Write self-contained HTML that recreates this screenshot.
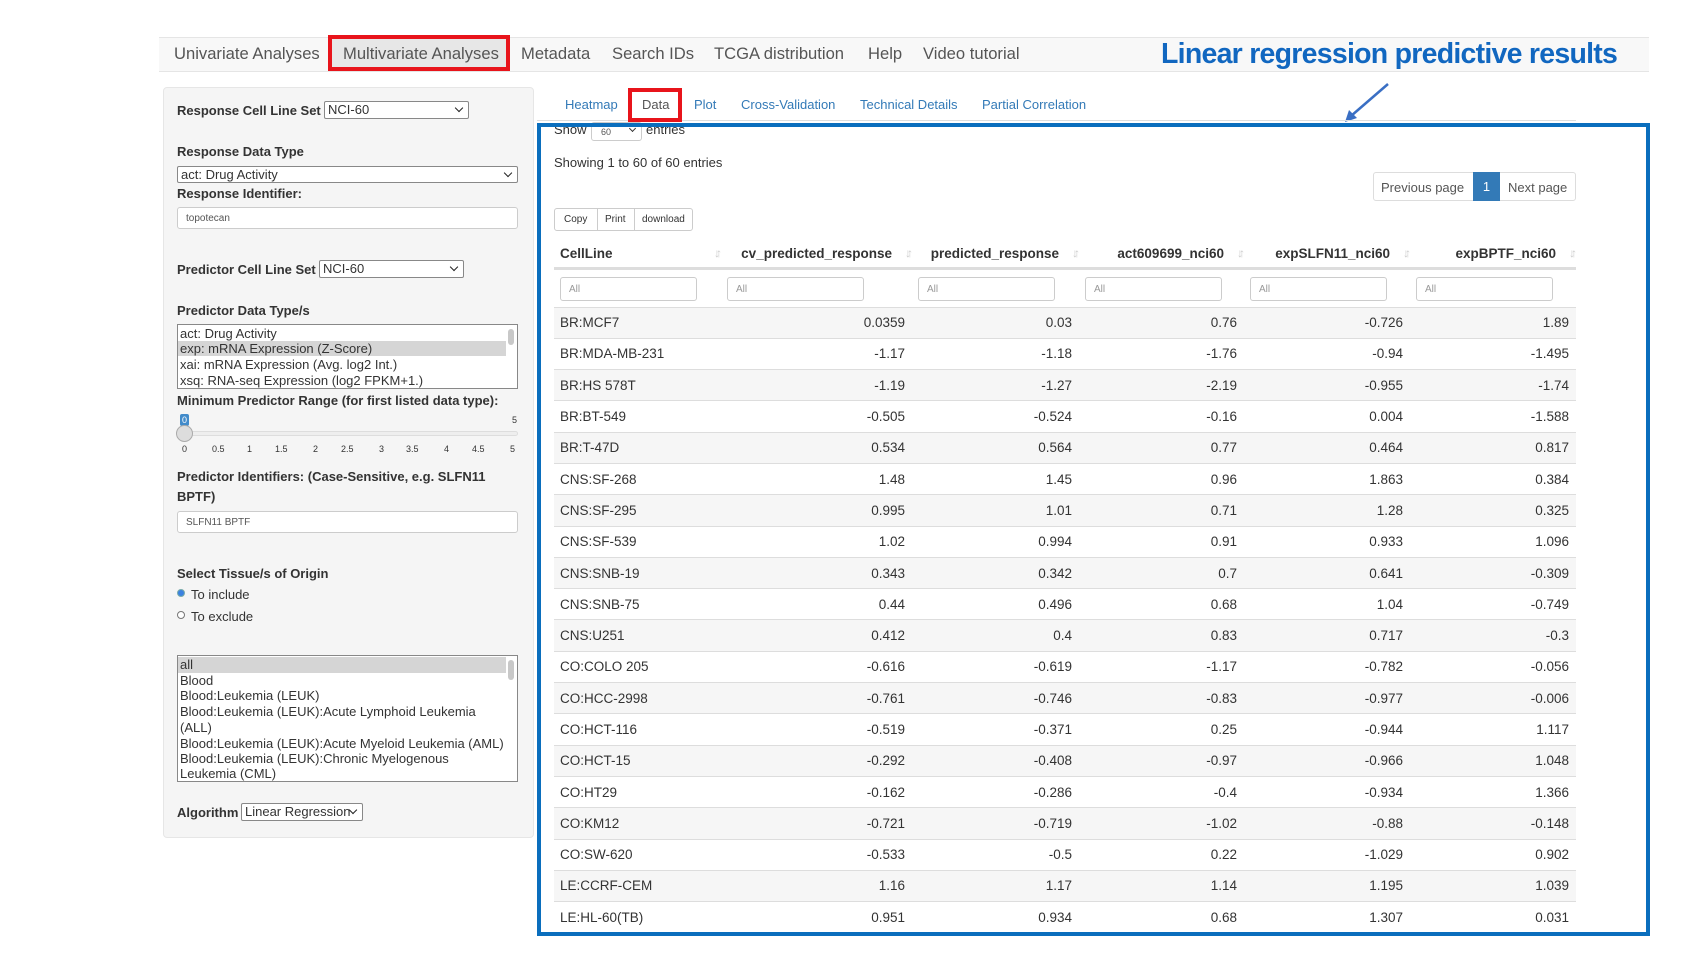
<!DOCTYPE html>
<html><head><meta charset="utf-8"><style>
*{box-sizing:border-box;margin:0;padding:0}
body{width:1700px;height:956px;background:#fff;font-family:"Liberation Sans",Arial,sans-serif;color:#333;position:relative;overflow:hidden}
.a{position:absolute;white-space:nowrap}
.nav{font-size:16.6px;color:#555;top:44px}
.lbl{font-weight:bold;font-size:13px;color:#333}
.sel{position:absolute;background:#fff;border:1px solid #888;border-radius:2px;font-size:13px;padding-left:3px;line-height:15px}
.sel:after{content:"";position:absolute;right:6px;top:3px;width:5px;height:5px;border-right:1.5px solid #222;border-bottom:1.5px solid #222;transform:rotate(45deg)}
.inp{position:absolute;background:#fff;border:1px solid #ccc;border-radius:3px;font-size:10px;color:#555;padding-left:8px}
.tab{font-size:13px;color:#337ab7;top:97px}
table{position:absolute;left:554px;top:240px;width:1022px;border-collapse:collapse;font-size:13.5px;table-layout:fixed}
th{height:28px;font-weight:bold;text-align:right;padding-right:20px;border-bottom:3px solid #ddd;position:relative;vertical-align:middle}
th:after{content:"\2193\2191";position:absolute;right:3px;top:6px;font-size:12px;color:#ccc;letter-spacing:-4px;font-weight:normal}
th.l{text-align:left;padding-left:6px}
td.f{height:39px;border-bottom:1px solid #ddd;padding-left:6px;vertical-align:top;padding-top:7px}
td.f div{width:137px;height:24px;border:1px solid #ccc;border-radius:3px;font-size:10px;color:#999;padding:6px 0 0 8px}
tr.r td{height:31.3px;border-top:1px solid #ddd;text-align:right;padding-right:7px}
tr.r td:first-child{text-align:left;padding-left:6px}
tr.r:nth-child(odd) td{background:#f6f6f6}
.opt{position:absolute;left:2px;font-size:13px;line-height:15.5px;width:330px}
</style></head><body>
<div class="a" style="left:159px;top:37px;width:1490px;height:35px;background:#f8f8f8;border-top:1px solid #e5e5e5;border-bottom:1px solid #e5e5e5"></div>
<div class="a" style="left:331px;top:38px;width:176px;height:30px;background:#e7e7e7"></div>
<div class="a nav" style="left:174px">Univariate Analyses</div>
<div class="a nav" style="left:343px">Multivariate Analyses</div>
<div class="a nav" style="left:521px">Metadata</div>
<div class="a nav" style="left:612px">Search IDs</div>
<div class="a nav" style="left:714px">TCGA distribution</div>
<div class="a nav" style="left:868px">Help</div>
<div class="a nav" style="left:923px">Video tutorial</div>
<div class="a" style="left:328px;top:35px;width:182px;height:36px;border:4px solid #e8141b"></div>
<div class="a" style="left:1161px;top:38px;font-size:28.5px;font-weight:bold;color:#1167c0;letter-spacing:-0.75px">Linear regression predictive results</div>
<svg class="a" style="left:1340px;top:80px" width="55" height="45"><line x1="48" y1="4" x2="11" y2="36" stroke="#3a6fc4" stroke-width="2.5"/><path d="M5 42 L9 30 L17 38 Z" fill="#3a6fc4"/></svg>

<div class="a" style="left:163px;top:87px;width:371px;height:751px;background:#f5f5f5;border:1px solid #e6e6e6;border-radius:4px"></div>
<div class="a lbl" style="left:177px;top:103px">Response Cell Line Set</div>
<div class="sel" style="left:324px;top:101px;width:145px;height:18px">NCI-60</div>
<div class="a lbl" style="left:177px;top:144px">Response Data Type</div>
<div class="sel" style="left:177px;top:166px;width:341px;height:17px">act: Drug Activity</div>
<div class="a lbl" style="left:177px;top:186px">Response Identifier:</div>
<div class="inp" style="left:177px;top:207px;width:341px;height:22px;padding-top:5px">topotecan</div>
<div class="a lbl" style="left:177px;top:262px">Predictor Cell Line Set</div>
<div class="sel" style="left:319px;top:260px;width:145px;height:18px">NCI-60</div>
<div class="a lbl" style="left:177px;top:303px">Predictor Data Type/s</div>
<div class="a" style="left:177px;top:324px;width:341px;height:65px;background:#fff;border:1px solid #888">
 <div class="a" style="left:0;top:16px;width:328px;height:15px;background:#d5d5d5"></div>
 <div class="opt" style="top:1px">act: Drug Activity</div>
 <div class="opt" style="top:16px">exp: mRNA Expression (Z-Score)</div>
 <div class="opt" style="top:32px">xai: mRNA Expression (Avg. log2 Int.)</div>
 <div class="opt" style="top:48px">xsq: RNA-seq Expression (log2 FPKM+1.)</div>
 <div class="a" style="right:3px;top:4px;width:6px;height:16px;background:#c8c8c8;border-radius:3px"></div>
</div>
<div class="a lbl" style="left:177px;top:393px">Minimum Predictor Range (for first listed data type):</div>
<div class="a" style="left:180px;top:414px;width:9px;height:12px;background:#428bca;border-radius:2px;color:#fff;font-size:9px;text-align:center;line-height:12px">0</div>
<div class="a" style="left:512px;top:415px;font-size:9px;color:#333">5</div>
<div class="a" style="left:184px;top:431px;width:334px;height:5px;background:#eee;border:1px solid #ddd;border-radius:3px"></div>
<div class="a" style="left:176px;top:425px;width:17px;height:17px;border-radius:50%;background:#ddd;border:1px solid #aaa"></div>
<div class="a" style="left:184px;top:444px;font-size:9px">
<span class="a" style="left:-2px">0</span><span class="a" style="left:28px">0.5</span><span class="a" style="left:63px">1</span><span class="a" style="left:91px">1.5</span><span class="a" style="left:129px">2</span><span class="a" style="left:157px">2.5</span><span class="a" style="left:195px">3</span><span class="a" style="left:222px">3.5</span><span class="a" style="left:260px">4</span><span class="a" style="left:288px">4.5</span><span class="a" style="left:326px">5</span></div>
<div class="a lbl" style="left:177px;top:469px">Predictor Identifiers: (Case-Sensitive, e.g. SLFN11</div>
<div class="a lbl" style="left:177px;top:489px">BPTF)</div>
<div class="inp" style="left:177px;top:511px;width:341px;height:22px;padding-top:5px">SLFN11 BPTF</div>
<div class="a lbl" style="left:177px;top:566px">Select Tissue/s of Origin</div>
<div class="a" style="left:177px;top:589px;width:8px;height:8px;border-radius:50%;background:#3b82e0;border:1px solid #7aa"></div>
<div class="a" style="left:191px;top:587px;font-size:13px">To include</div>
<div class="a" style="left:177px;top:611px;width:8px;height:8px;border-radius:50%;background:#fff;border:1px solid #777"></div>
<div class="a" style="left:191px;top:609px;font-size:13px">To exclude</div>
<div class="a" style="left:177px;top:655px;width:341px;height:127px;background:#fff;border:1px solid #888;overflow:hidden">
 <div class="a" style="left:0;top:1px;width:328px;height:16px;background:#d5d5d5"></div>
 <div class="opt" style="top:1px">all</div>
 <div class="opt" style="top:17px">Blood</div>
 <div class="opt" style="top:32px">Blood:Leukemia (LEUK)</div>
 <div class="opt" style="top:48px">Blood:Leukemia (LEUK):Acute Lymphoid Leukemia</div>
 <div class="opt" style="top:64px">(ALL)</div>
 <div class="opt" style="top:80px">Blood:Leukemia (LEUK):Acute Myeloid Leukemia (AML)</div>
 <div class="opt" style="top:95px">Blood:Leukemia (LEUK):Chronic Myelogenous</div>
 <div class="opt" style="top:110px">Leukemia (CML)</div>
 <div class="a" style="right:3px;top:4px;width:6px;height:20px;background:#c8c8c8;border-radius:3px"></div>
</div>
<div class="a lbl" style="left:177px;top:805px">Algorithm</div>
<div class="sel" style="left:241px;top:803px;width:122px;height:18px">Linear Regression</div>

<div class="a" style="left:537px;top:120px;width:1039px;height:1px;background:#ddd"></div>
<div class="a tab" style="left:565px">Heatmap</div>
<div class="a tab" style="left:642px;color:#555">Data</div>
<div class="a tab" style="left:694px">Plot</div>
<div class="a tab" style="left:741px">Cross-Validation</div>
<div class="a tab" style="left:860px">Technical Details</div>
<div class="a tab" style="left:982px">Partial Correlation</div>
<div class="a" style="left:628px;top:88px;width:54px;height:34px;border:4px solid #e8141b"></div>

<div class="a" style="left:554px;top:122px;font-size:13px">Show</div>
<div class="a" style="left:591px;top:122px;width:51px;height:19px;border:1px solid #ccc;border-radius:3px;background:#fff;font-size:9px;color:#555;padding:4px 0 0 9px">60</div>
<div class="a" style="left:630px;top:126px;width:5px;height:5px;border-right:1.5px solid #333;border-bottom:1.5px solid #333;transform:rotate(45deg)"></div>
<div class="a" style="left:646px;top:122px;font-size:13px">entries</div>
<div class="a" style="left:554px;top:155px;font-size:13px">Showing 1 to 60 of 60 entries</div>

<div class="a" style="left:1373px;top:172px;width:203px;height:29px;border:1px solid #ddd;border-radius:3px;font-size:13px;color:#555">
 <span class="a" style="left:7px;top:7px">Previous page</span>
 <div class="a" style="left:99px;top:-1px;width:27px;height:29px;background:#337ab7;color:#fff;text-align:center;line-height:29px">1</div>
 <span class="a" style="left:134px;top:7px">Next page</span>
</div>
<div class="a" style="left:554px;top:208px;width:139px;height:23px;border:1px solid #ccc;border-radius:3px;font-size:10px;color:#333">
 <span class="a" style="left:9px;top:5px">Copy</span>
 <div class="a" style="left:42px;top:0;width:1px;height:21px;background:#ccc"></div>
 <span class="a" style="left:50px;top:5px">Print</span>
 <div class="a" style="left:79px;top:0;width:1px;height:21px;background:#ccc"></div>
 <span class="a" style="left:87px;top:5px">download</span>
</div>

<table>
<colgroup><col style="width:167px"><col style="width:191px"><col style="width:167px"><col style="width:165px"><col style="width:166px"><col style="width:166px"></colgroup>
<tr><th class="l">CellLine</th><th>cv_predicted_response</th><th>predicted_response</th><th>act609699_nci60</th><th>expSLFN11_nci60</th><th>expBPTF_nci60</th></tr>
<tr><td class="f"><div>All</div></td><td class="f"><div>All</div></td><td class="f"><div>All</div></td><td class="f"><div>All</div></td><td class="f"><div>All</div></td><td class="f"><div>All</div></td></tr>
<tbody>
<tr class="r"><td>BR:MCF7</td><td>0.0359</td><td>0.03</td><td>0.76</td><td>-0.726</td><td>1.89</td></tr>
<tr class="r"><td>BR:MDA-MB-231</td><td>-1.17</td><td>-1.18</td><td>-1.76</td><td>-0.94</td><td>-1.495</td></tr>
<tr class="r"><td>BR:HS 578T</td><td>-1.19</td><td>-1.27</td><td>-2.19</td><td>-0.955</td><td>-1.74</td></tr>
<tr class="r"><td>BR:BT-549</td><td>-0.505</td><td>-0.524</td><td>-0.16</td><td>0.004</td><td>-1.588</td></tr>
<tr class="r"><td>BR:T-47D</td><td>0.534</td><td>0.564</td><td>0.77</td><td>0.464</td><td>0.817</td></tr>
<tr class="r"><td>CNS:SF-268</td><td>1.48</td><td>1.45</td><td>0.96</td><td>1.863</td><td>0.384</td></tr>
<tr class="r"><td>CNS:SF-295</td><td>0.995</td><td>1.01</td><td>0.71</td><td>1.28</td><td>0.325</td></tr>
<tr class="r"><td>CNS:SF-539</td><td>1.02</td><td>0.994</td><td>0.91</td><td>0.933</td><td>1.096</td></tr>
<tr class="r"><td>CNS:SNB-19</td><td>0.343</td><td>0.342</td><td>0.7</td><td>0.641</td><td>-0.309</td></tr>
<tr class="r"><td>CNS:SNB-75</td><td>0.44</td><td>0.496</td><td>0.68</td><td>1.04</td><td>-0.749</td></tr>
<tr class="r"><td>CNS:U251</td><td>0.412</td><td>0.4</td><td>0.83</td><td>0.717</td><td>-0.3</td></tr>
<tr class="r"><td>CO:COLO 205</td><td>-0.616</td><td>-0.619</td><td>-1.17</td><td>-0.782</td><td>-0.056</td></tr>
<tr class="r"><td>CO:HCC-2998</td><td>-0.761</td><td>-0.746</td><td>-0.83</td><td>-0.977</td><td>-0.006</td></tr>
<tr class="r"><td>CO:HCT-116</td><td>-0.519</td><td>-0.371</td><td>0.25</td><td>-0.944</td><td>1.117</td></tr>
<tr class="r"><td>CO:HCT-15</td><td>-0.292</td><td>-0.408</td><td>-0.97</td><td>-0.966</td><td>1.048</td></tr>
<tr class="r"><td>CO:HT29</td><td>-0.162</td><td>-0.286</td><td>-0.4</td><td>-0.934</td><td>1.366</td></tr>
<tr class="r"><td>CO:KM12</td><td>-0.721</td><td>-0.719</td><td>-1.02</td><td>-0.88</td><td>-0.148</td></tr>
<tr class="r"><td>CO:SW-620</td><td>-0.533</td><td>-0.5</td><td>0.22</td><td>-1.029</td><td>0.902</td></tr>
<tr class="r"><td>LE:CCRF-CEM</td><td>1.16</td><td>1.17</td><td>1.14</td><td>1.195</td><td>1.039</td></tr>
<tr class="r"><td>LE:HL-60(TB)</td><td>0.951</td><td>0.934</td><td>0.68</td><td>1.307</td><td>0.031</td></tr>
</tbody></table>
<div class="a" style="left:537px;top:934px;width:1113px;height:22px;background:#fff"></div>
<div class="a" style="left:537px;top:123px;width:1113px;height:813px;border:4px solid #0a6ebd"></div>
</body></html>
